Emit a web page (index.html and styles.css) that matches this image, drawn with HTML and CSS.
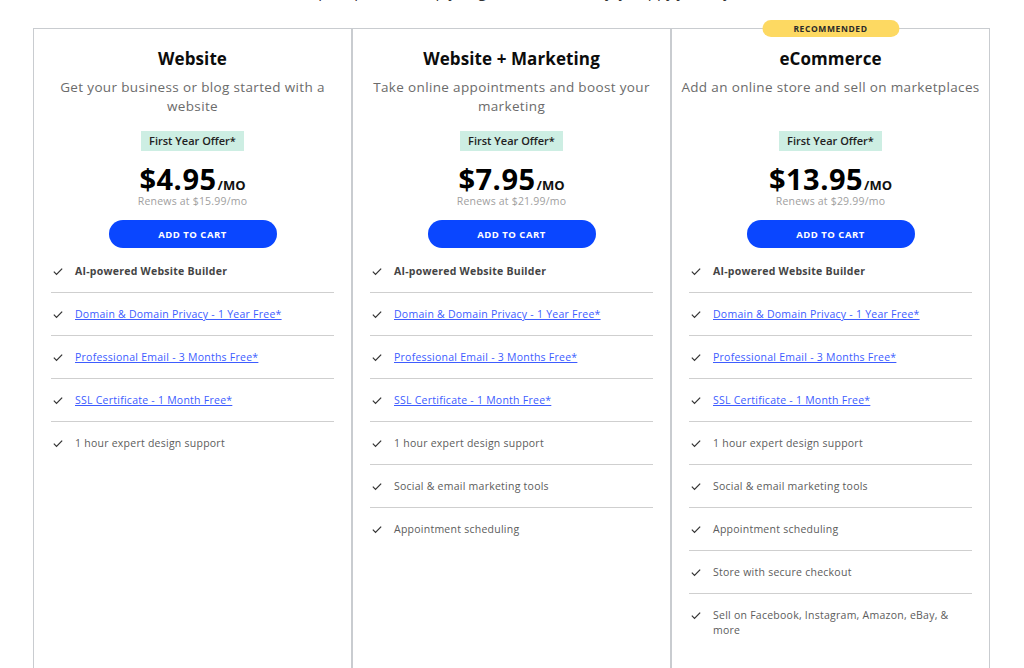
FILE: index.html
```html
<!DOCTYPE html>
<html lang="en">
<head>
<meta charset="utf-8">
<title>Plans</title>
<link rel="stylesheet" href="styles.css">
</head>
<body>
<div class="page">
  <div class="intro"><p>Compare plans to help you get started and enjoy happy journeys</p></div>
  <div class="plans">
    <section class="card">
      <h2 class="title">Website</h2>
      <p class="desc">Get your business or blog started with a website</p>
      <span class="offer">First Year Offer*</span>
      <div class="price"><span class="amount">$4.95</span><span class="per">/MO</span></div>
      <div class="renew">Renews at $15.99/mo</div>
      <button class="cart">ADD TO CART</button>
      <ul class="features">
        <li><svg class="check" viewBox="0 0 12 10"><path d="M1 5.2 4.2 8.4 11 1.6"/></svg><b>AI-powered Website Builder</b></li>
        <li><svg class="check" viewBox="0 0 12 10"><path d="M1 5.2 4.2 8.4 11 1.6"/></svg><a href="#">Domain &amp; Domain Privacy - 1 Year Free*</a></li>
        <li><svg class="check" viewBox="0 0 12 10"><path d="M1 5.2 4.2 8.4 11 1.6"/></svg><a href="#">Professional Email - 3 Months Free*</a></li>
        <li><svg class="check" viewBox="0 0 12 10"><path d="M1 5.2 4.2 8.4 11 1.6"/></svg><a href="#">SSL Certificate - 1 Month Free*</a></li>
        <li><svg class="check" viewBox="0 0 12 10"><path d="M1 5.2 4.2 8.4 11 1.6"/></svg><span>1 hour expert design support</span></li>
      </ul>
    </section>
    <section class="card">
      <h2 class="title">Website + Marketing</h2>
      <p class="desc">Take online appointments and boost your marketing</p>
      <span class="offer">First Year Offer*</span>
      <div class="price"><span class="amount">$7.95</span><span class="per">/MO</span></div>
      <div class="renew">Renews at $21.99/mo</div>
      <button class="cart">ADD TO CART</button>
      <ul class="features">
        <li><svg class="check" viewBox="0 0 12 10"><path d="M1 5.2 4.2 8.4 11 1.6"/></svg><b>AI-powered Website Builder</b></li>
        <li><svg class="check" viewBox="0 0 12 10"><path d="M1 5.2 4.2 8.4 11 1.6"/></svg><a href="#">Domain &amp; Domain Privacy - 1 Year Free*</a></li>
        <li><svg class="check" viewBox="0 0 12 10"><path d="M1 5.2 4.2 8.4 11 1.6"/></svg><a href="#">Professional Email - 3 Months Free*</a></li>
        <li><svg class="check" viewBox="0 0 12 10"><path d="M1 5.2 4.2 8.4 11 1.6"/></svg><a href="#">SSL Certificate - 1 Month Free*</a></li>
        <li><svg class="check" viewBox="0 0 12 10"><path d="M1 5.2 4.2 8.4 11 1.6"/></svg><span>1 hour expert design support</span></li>
        <li><svg class="check" viewBox="0 0 12 10"><path d="M1 5.2 4.2 8.4 11 1.6"/></svg><span>Social &amp; email marketing tools</span></li>
        <li><svg class="check" viewBox="0 0 12 10"><path d="M1 5.2 4.2 8.4 11 1.6"/></svg><span>Appointment scheduling</span></li>
      </ul>
    </section>
    <section class="card recommended">
      <span class="rec-badge">RECOMMENDED</span>
      <h2 class="title">eCommerce</h2>
      <p class="desc">Add an online store and sell on marketplaces</p>
      <span class="offer">First Year Offer*</span>
      <div class="price"><span class="amount">$13.95</span><span class="per">/MO</span></div>
      <div class="renew">Renews at $29.99/mo</div>
      <button class="cart">ADD TO CART</button>
      <ul class="features">
        <li><svg class="check" viewBox="0 0 12 10"><path d="M1 5.2 4.2 8.4 11 1.6"/></svg><b>AI-powered Website Builder</b></li>
        <li><svg class="check" viewBox="0 0 12 10"><path d="M1 5.2 4.2 8.4 11 1.6"/></svg><a href="#">Domain &amp; Domain Privacy - 1 Year Free*</a></li>
        <li><svg class="check" viewBox="0 0 12 10"><path d="M1 5.2 4.2 8.4 11 1.6"/></svg><a href="#">Professional Email - 3 Months Free*</a></li>
        <li><svg class="check" viewBox="0 0 12 10"><path d="M1 5.2 4.2 8.4 11 1.6"/></svg><a href="#">SSL Certificate - 1 Month Free*</a></li>
        <li><svg class="check" viewBox="0 0 12 10"><path d="M1 5.2 4.2 8.4 11 1.6"/></svg><span>1 hour expert design support</span></li>
        <li><svg class="check" viewBox="0 0 12 10"><path d="M1 5.2 4.2 8.4 11 1.6"/></svg><span>Social &amp; email marketing tools</span></li>
        <li><svg class="check" viewBox="0 0 12 10"><path d="M1 5.2 4.2 8.4 11 1.6"/></svg><span>Appointment scheduling</span></li>
        <li><svg class="check" viewBox="0 0 12 10"><path d="M1 5.2 4.2 8.4 11 1.6"/></svg><span>Store with secure checkout</span></li>
        <li><svg class="check" viewBox="0 0 12 10"><path d="M1 5.2 4.2 8.4 11 1.6"/></svg><span>Sell on Facebook, Instagram, Amazon, eBay, &amp; more</span></li>
      </ul>
    </section>
  </div>
</div>
</body>
</html>
```

FILE: styles.css
```css
* { box-sizing: border-box; }
html, body { margin: 0; padding: 0; background: #fff; }
body {
  font-family: "Open Sans", "Liberation Sans", sans-serif;
  color: #222;
  overflow: hidden;
}
.page {
  width: 1024px;
  height: 668px;
  overflow: hidden;
}
.intro {
  height: 28px;
  overflow: hidden;
  text-align: center;
}
.intro p {
  margin: -19px 0 0;
  font-size: 15px;
  line-height: 20px;
  color: #333;
}
.plans {
  display: grid;
  grid-template-columns: repeat(3, 319px);
  margin-left: 33px;
}
.card {
  position: relative;
  border: 1px solid #c9ccd0;
  padding: 18px 17px 40px;
  display: flex;
  flex-direction: column;
  align-items: center;
  min-height: 700px;
}
.rec-badge {
  position: absolute;
  top: -9px;
  left: 50%;
  transform: translateX(-50%);
  width: 137px;
  height: 17px;
  border-radius: 9px;
  background: #fdd962;
  color: #2a2a2a;
  font-size: 8.5px;
  font-weight: 700;
  letter-spacing: 0.6px;
  line-height: 17px;
  text-align: center;
}
.title {
  margin: 0;
  font-size: 17px;
  line-height: 24px;
  font-weight: 700;
  color: #0c0c0c;
  letter-spacing: 0.1px;
}
.desc {
  margin: 7px -12px 0;
  height: 38px;
  font-size: 13.5px;
  line-height: 19px;
  color: #6b6b6b;
  text-align: center;
  letter-spacing: 0.35px;
}
.offer {
  margin-top: 15px;
  height: 20px;
  padding: 0 8px;
  background: #cdeee3;
  color: #222;
  font-size: 11px;
  font-weight: 600;
  line-height: 20px;
}
.price {
  margin-top: 14px;
  height: 28px;
  display: flex;
  align-items: baseline;
  justify-content: center;
  line-height: 28px;
}
.amount {
  font-size: 29px;
  font-weight: 700;
  color: #000;
  letter-spacing: 0.5px;
}
.per {
  font-size: 13px;
  font-weight: 700;
  color: #111;
  margin-left: 1px;
}
.renew {
  margin-top: 2px;
  height: 13px;
  font-size: 10.5px;
  line-height: 13px;
  color: #a0a0a0;
  letter-spacing: 0.2px;
}
.cart {
  margin-top: 12px;
  width: 168px;
  height: 28px;
  border: 0;
  border-radius: 14px;
  background: #0a46ff;
  color: #fff;
  font-family: inherit;
  font-size: 9.5px;
  font-weight: 700;
  letter-spacing: 0.5px;
  cursor: pointer;
}
.features {
  list-style: none;
  margin: 2px 0 0;
  padding: 0;
  width: 100%;
}
.features li {
  display: flex;
  align-items: flex-start;
  gap: 12px;
  padding: 14px 0 13px 2px;
  border-bottom: 1px solid #cfcfcf;
  font-size: 10.5px;
  line-height: 15px;
  color: #5c5c5c;
  letter-spacing: 0.25px;
}
.features li:last-child { border-bottom: 0; }
.check {
  flex: none;
  width: 10px;
  height: 9px;
  margin-top: 3px;
  fill: none;
  stroke: #333;
  stroke-width: 1.5;
}
.features b {
  font-weight: 700;
  color: #444;
}
.features a {
  color: #3d5cff;
  text-decoration: underline;
}
.features span { padding-right: 20px; }
```
